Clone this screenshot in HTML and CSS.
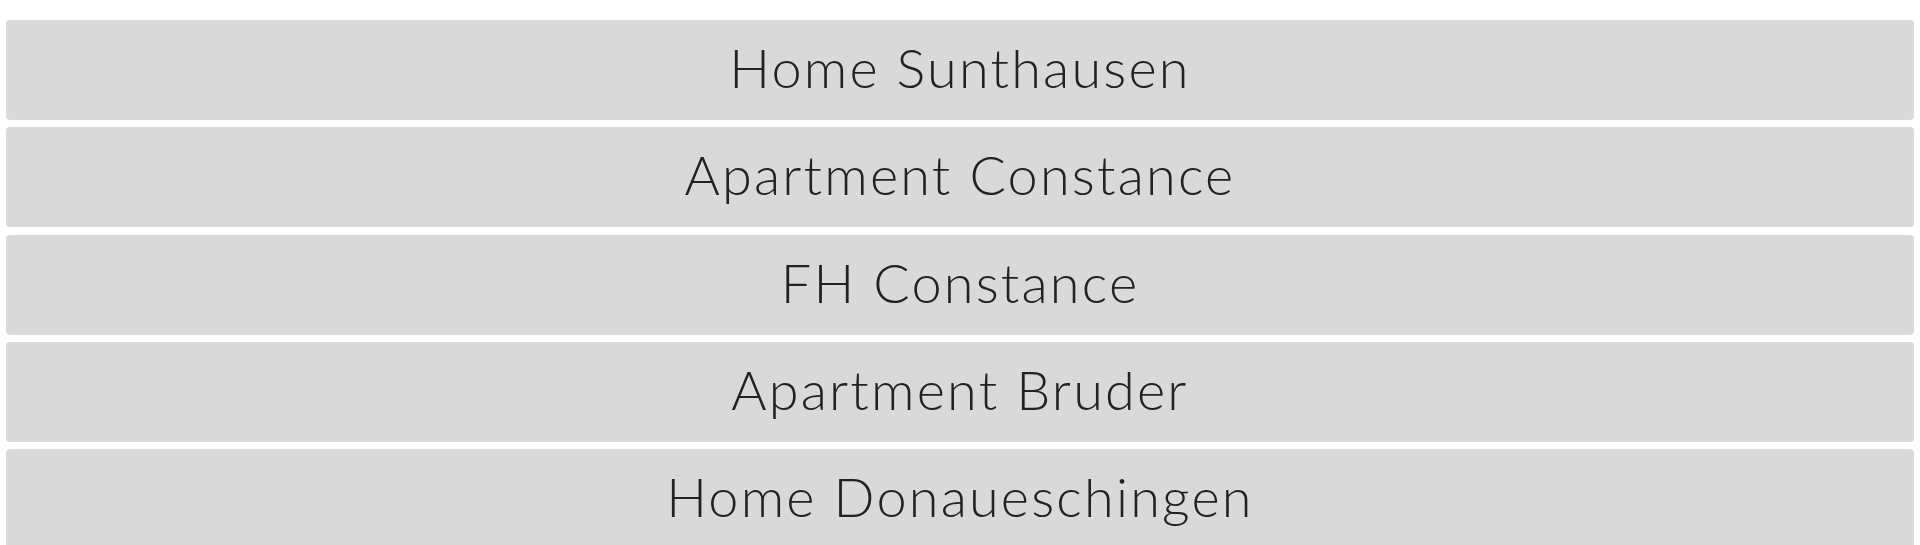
FILE: index.html
```html
<!DOCTYPE html>
<html lang="en">
<head>
<meta charset="utf-8">
<title>Locations</title>
<link rel="stylesheet" href="styles.css">
</head>
<body>
<main class="list">
  <a class="item" href="#">Home Sunthausen</a>
  <a class="item" href="#">Apartment Constance</a>
  <a class="item" href="#">FH Constance</a>
  <a class="item" href="#">Apartment Bruder</a>
  <a class="item" href="#">Home Donaueschingen</a>
</main>
</body>
</html>
```

FILE: styles.css
```css
html, body {
  margin: 0;
  padding: 0;
  background: #ffffff;
}
body {
  font-family: "Lato", "Open Sans", sans-serif;
  font-weight: 300;
}
.list {
  display: flex;
  flex-direction: column;
  gap: 7.3px;
  padding: 20px 6px 0 6px;
}
.item {
  display: flex;
  align-items: center;
  justify-content: center;
  box-sizing: border-box;
  height: 100px;
  padding-bottom: 5px;
  flex: none;
  background: #d9d9d9;
  border-radius: 4px;
  color: #222222;
  text-decoration: none;
  font-size: 54px;
  letter-spacing: 2.2px;
}
```
